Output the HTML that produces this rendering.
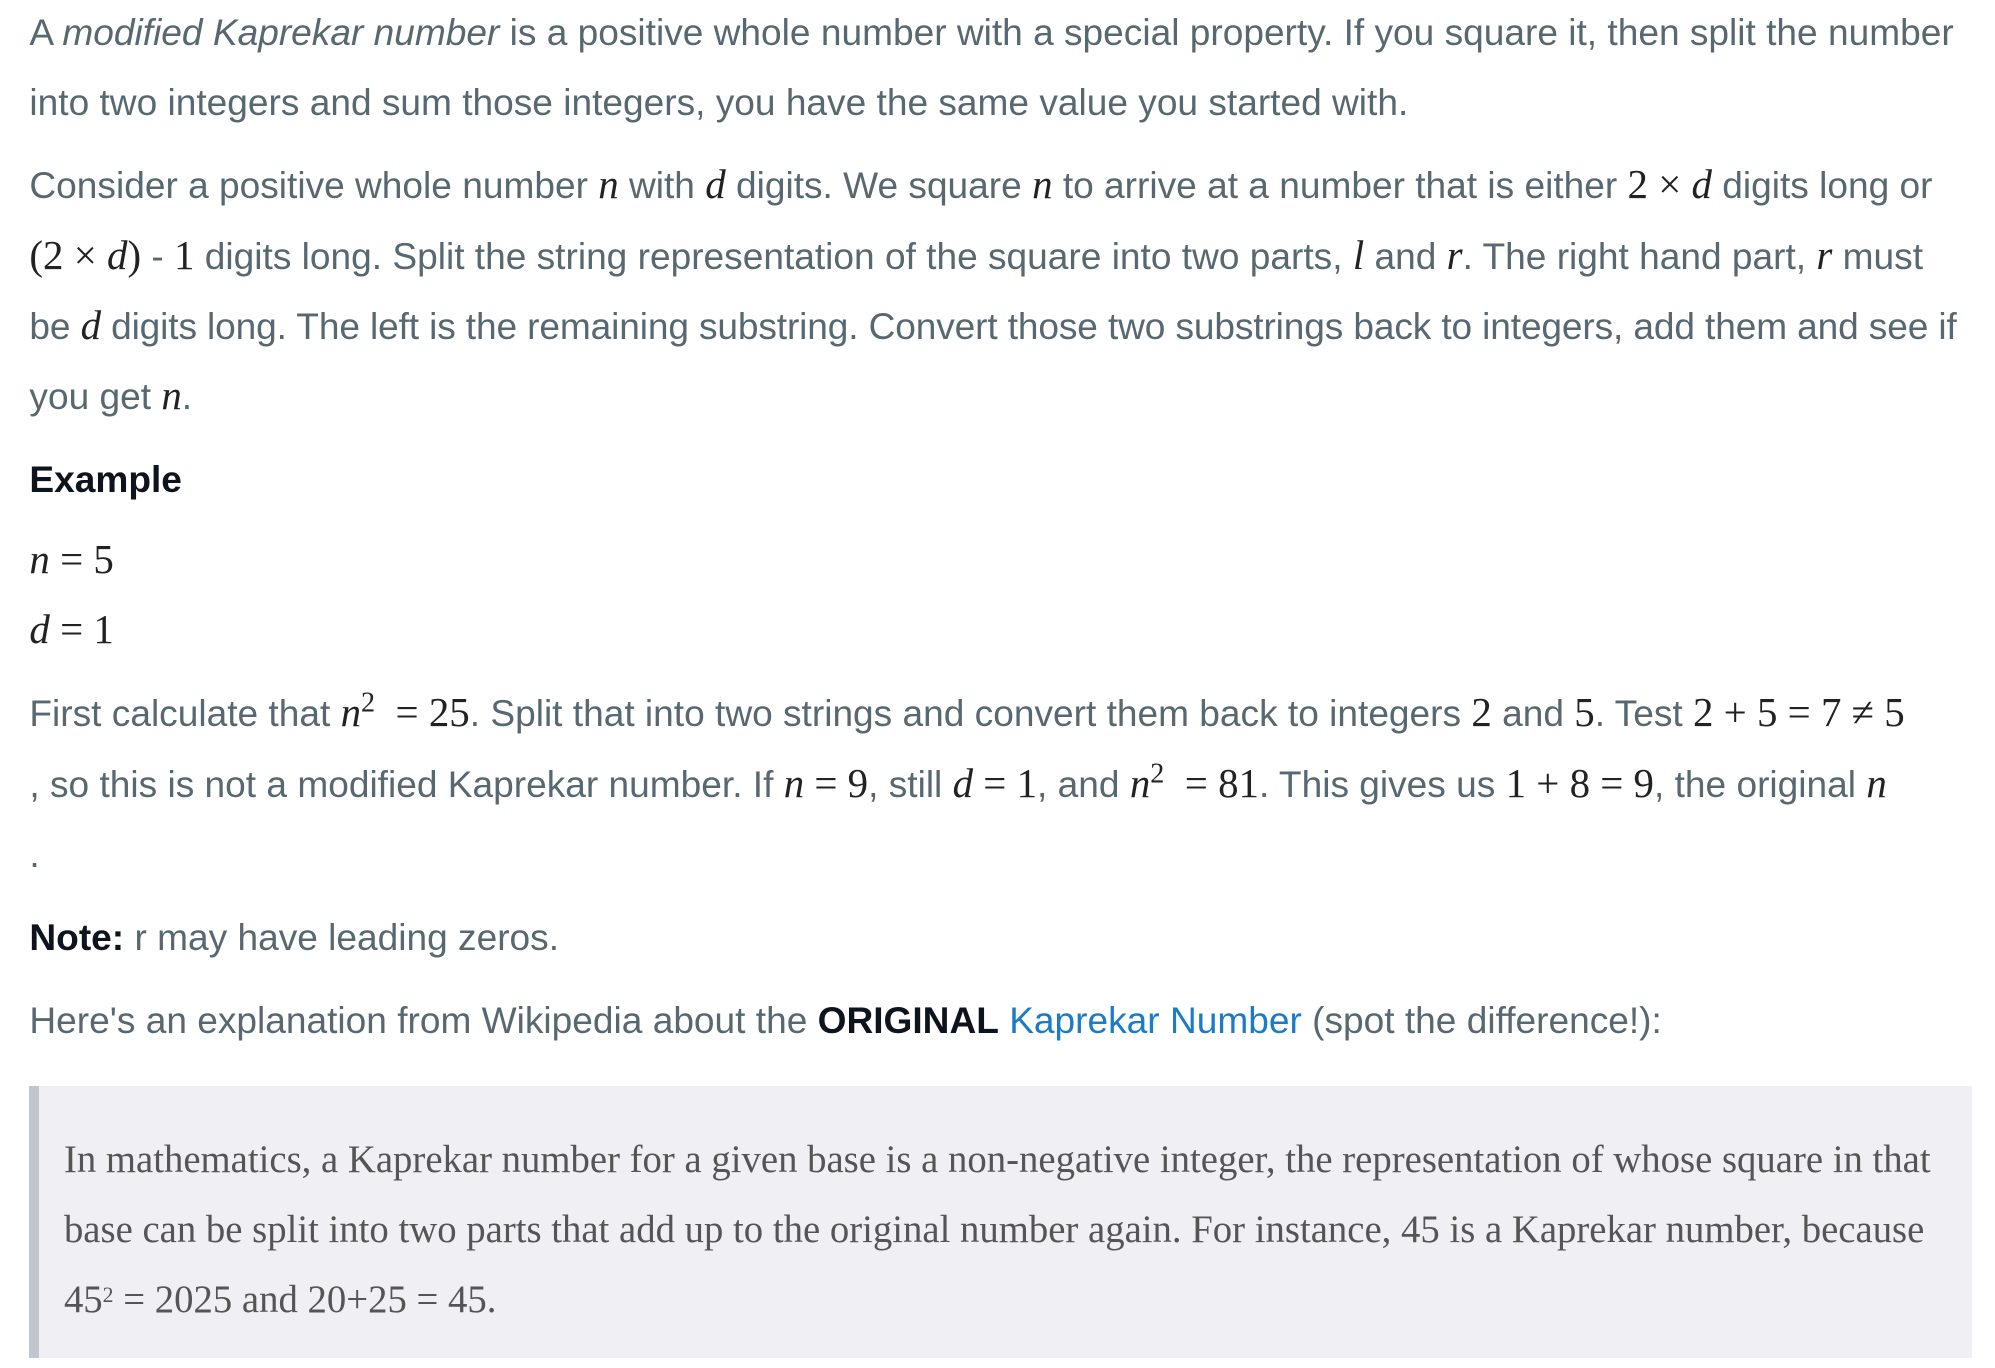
<!DOCTYPE html>
<html><head><meta charset="utf-8"><style>
html{zoom:1.2788}
body{margin:0;background:#fff;width:1560px;height:1070px;position:relative;overflow:hidden;font-family:"Liberation Sans",sans-serif;font-size:29px;color:#576871}
.l{position:absolute;left:23px;white-space:nowrap;line-height:30px}
.m{font-family:"Liberation Serif",serif;font-size:32px;color:#222}
.i{font-style:italic}
b{color:#0e141e}
a{color:#1a7bc8;text-decoration:none}
sup{line-height:0}
.bq{position:absolute;left:23px;top:849px;width:1519px;height:213px;background:#f0f0f4;border-left:8px solid #c0c6cf;box-sizing:border-box}
.s{position:absolute;left:50px;white-space:nowrap;font-family:"Liberation Serif",serif;font-size:30.3px;color:#555;line-height:30px}
</style></head><body>
<div class="l" style="top:10px">A <i>modified Kaprekar number</i> is a positive whole number with a special property. If you square it, then split the number</div>
<div class="l" style="top:65px">into two integers and sum those integers, you have the same value you started with.</div>
<div class="l" style="top:130px">Consider a positive whole number <span class="m i">n</span> with <span class="m i">d</span> digits. We square <span class="m i">n</span> to arrive at a number that is either <span class="m">2 × <i>d</i></span> digits long or</div>
<div class="l" style="top:185px"><span class="m">(2 × <i>d</i>)</span> - <span class="m">1</span> digits long. Split the string representation of the square into two parts, <span class="m i">l</span> and <span class="m i">r</span>. The right hand part, <span class="m i">r</span> must</div>
<div class="l" style="top:240px;letter-spacing:-0.1px">be <span class="m i">d</span> digits long. The left is the remaining substring. Convert those two substrings back to integers, add them and see if</div>
<div class="l" style="top:295px">you get <span class="m i">n</span>.</div>
<div class="l" style="top:360px"><b>Example</b></div>
<div class="l" style="top:423px"><span class="m"><i>n</i> = 5</span></div>
<div class="l" style="top:478px"><span class="m"><i>d</i> = 1</span></div>
<div class="l" style="top:543px">First calculate that <span class="m"><i>n</i><sup style="font-size:22px">2</sup> &nbsp;= 25</span>. Split that into two strings and convert them back to integers <span class="m">2</span> and <span class="m">5</span>. Test <span class="m">2 + 5 = 7 ≠ 5</span></div>
<div class="l" style="top:598px">, so this is not a modified Kaprekar number. If <span class="m"><i>n</i> = 9</span>, still <span class="m"><i>d</i> = 1</span>, and <span class="m"><i>n</i><sup style="font-size:22px">2</sup> &nbsp;= 81</span>. This gives us <span class="m">1 + 8 = 9</span>, the original <span class="m i">n</span></div>
<div class="l" style="top:653px">.</div>
<div class="l" style="top:718px"><b>Note:</b> r may have leading zeros.</div>
<div class="l" style="top:783px">Here's an explanation from Wikipedia about the <b>ORIGINAL</b> <a>Kaprekar Number</a> (spot the difference!):</div>
<div class="bq"></div>
<div class="s" style="top:892px">In mathematics, a Kaprekar number for a given base is a non-negative integer, the representation of whose square in that</div>
<div class="s" style="top:947px">base can be split into two parts that add up to the original number again. For instance, 45 is a Kaprekar number, because</div>
<div class="s" style="top:1002px">45<sup style="font-size:17px;vertical-align:8px">2</sup> = 2025 and 20+25 = 45.</div>
</body></html>
